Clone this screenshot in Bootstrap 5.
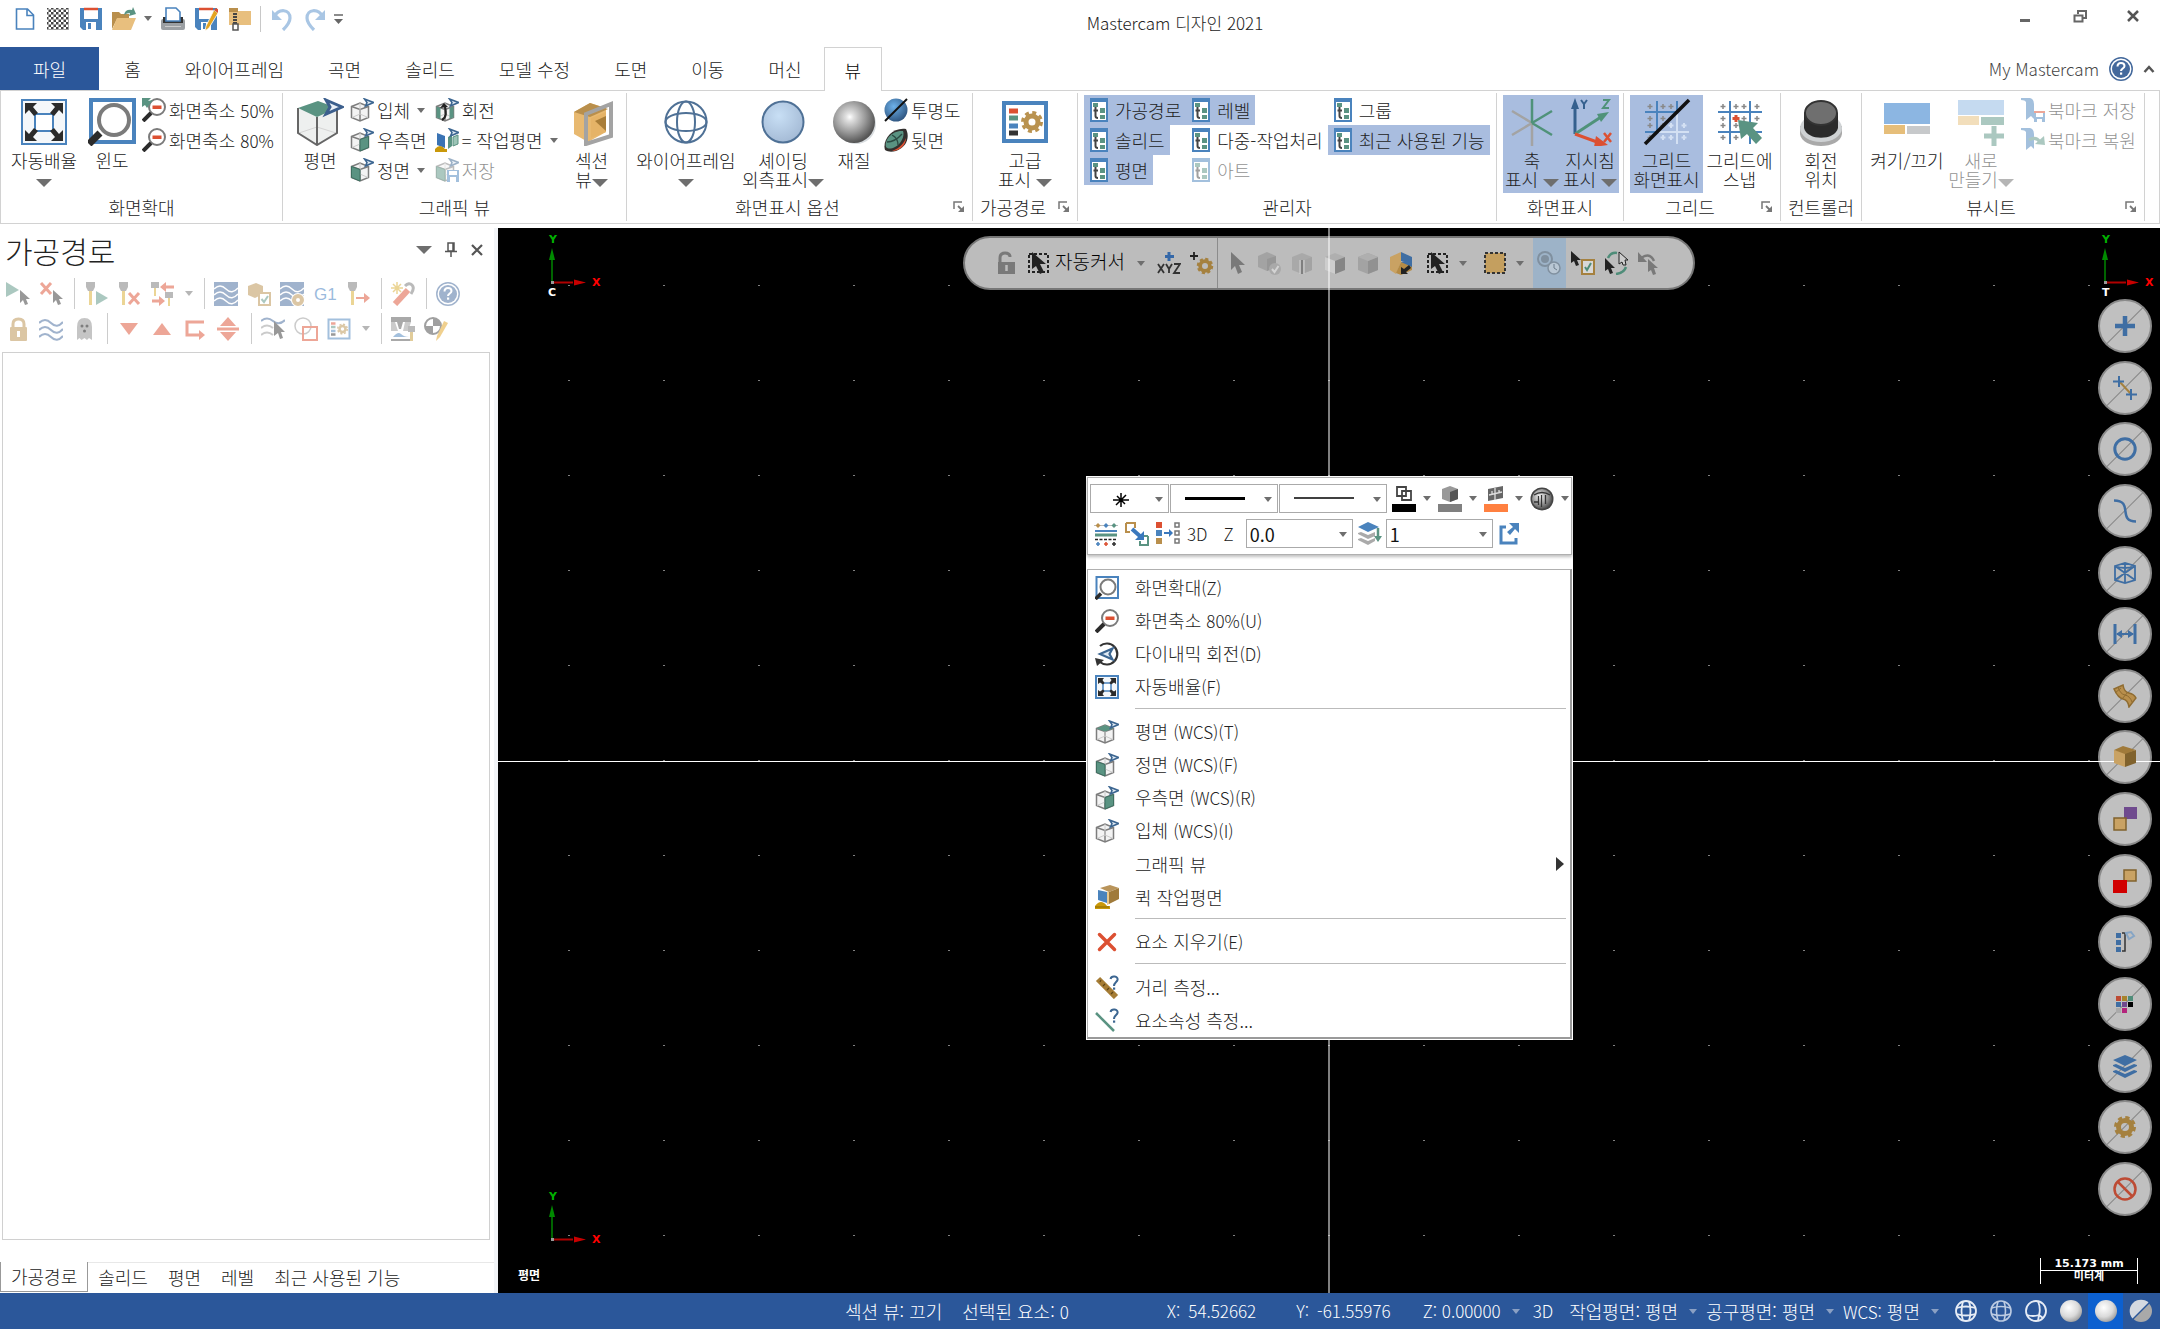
<!DOCTYPE html>
<html lang="ko">
<head>
<meta charset="utf-8">
<meta name="viewport" content="width=device-width, initial-scale=1">
<title>Mastercam 디자인 2021</title>
<link href="https://cdn.jsdelivr.net/npm/bootstrap@5.3.0/dist/css/bootstrap.min.css" rel="stylesheet">
<style>
  :root { --mc-blue:#2b579a; --mc-on:#a9bddf; --mc-line:#d2d2d2; --mc-text:#222; }
  body { font-family:"Noto Sans CJK KR","Noto Sans",sans-serif; font-size:18px; font-weight:300; line-height:20px; color:var(--mc-text); background:#fff; overflow:hidden; }
  button { background:none; border:0; padding:0; color:inherit; font:inherit; white-space:nowrap; }
  svg { flex:none; display:block; }
  .i24 { width:24px; height:24px; }
  .i48 { width:48px; height:48px; }
  .lat { font-size:17px; }
  .caret { display:inline-block; flex:none; width:0; height:0; border:4px solid transparent; border-top:5px solid #6e6e6e; border-bottom:0; }
  .caret-big { border-width:8px; border-top-width:8px; border-bottom:0; }

  .titlebar { height:47px; padding-left:13px; }
  .qat { gap:5px; height:30px; margin-top:-14px; }
  .win-name { font-size:17px; left:0; right:0; top:13px; padding-left:190px; }
  .win-btns { gap:29px; padding-right:15px; margin-top:-14px; }

  .tabs-row { height:43px; }
  .tabs-row .tab { height:43px; padding:0 22px; }
  .tabs-row .tab-file { background:var(--mc-blue); color:#fff; padding:0 33px; margin-right:3px; }
  .tabs-row .tab-on { height:44px; padding:0 20px; background:#fff; color:#000; border:1px solid var(--mc-line); border-bottom:0; position:relative; z-index:1; }
  .account { gap:10px; padding-right:5px; color:#444; }

  .ribbon { border:1px solid var(--mc-line); padding:2px 0; }
  .rgroup { border-right:1px solid var(--mc-line); flex:none; padding-top:2px; }
  .rgroup > .tools { height:98px; padding-left:6px; gap:2px; }
  .rgroup > .caption { height:28px; }
  .tight > .tools { gap:0; }
  .g-zoom { width:282px; } .g-view { width:344px; } .g-disp { width:346px; } .g-path { width:105px; } .g-mgr { width:419px; }
  .g-axis { width:127px; } .g-grid { width:157px; } .g-ctl { width:81px; } .g-sheet { width:283px; }
  .g-zoom > .tools { padding-left:4px; }
  .launch { width:24px; padding-left:5px; }
  .big { height:98px; padding-top:3px; line-height:19px; display:flex; flex-direction:column; align-items:center; flex:none; }
  .big > span { display:block; }
  .big svg { margin-bottom:5px; }
  .w-s { width:54px; } .w-m { width:58px; } .w-l { width:66px; } .w-g { width:73px; } .w-x { width:78px; } .w-y { width:84px; } .w-z { width:106px; }
  .small-btn { height:30px; display:flex; align-items:center; gap:3px; padding:0 1px; }
  .small-btn .caret { margin-left:4px; }
  .mgr { height:30px; display:flex; align-items:center; gap:7px; padding:0 5px 0 6px; }
  .on { background:var(--mc-on); }
  .off { opacity:.5; }

  .side { width:498px; border-right:4px solid #f2f4f7; }
  .side-head { height:48px; padding:0 10px 4px 5px; }
  .side-head .head-btn { margin-right:13px; }
  .side-title { font-size:30px; line-height:44px; font-weight:300; margin:0; color:#222; }
  .strip { height:35px; padding-left:6px; gap:9px; }
  .strip svg { opacity:.5; }
  .strip .caret { margin-left:3px; }
  .strip .rule { width:1px; height:31px; background:#ccc; margin-left:2px; }
  .tree { border:1px solid #d0d0d0; margin:6px 4px 0 2px; }
  .side-tabs { height:31px; margin-top:22px; border-top:1px solid #e8e8e8; padding-bottom:1px; }
  .side-tabs button { padding:0 10px 2px; }
  .side-tabs .cur { border:1px solid #999; border-top:0; margin-top:-1px; background:#fff; }

  .stage { background:#000 radial-gradient(circle 1px at center,#fff 0,#bbb 1px,transparent 1px) center center/95px 95px; color:#fff; overflow:hidden; }
  .axis-h { left:0; right:0; top:50%; height:1px; background:#fff; }
  .axis-v { top:0; bottom:0; left:50%; width:2px; margin-left:-1px; background:rgba(255,255,255,.5); }
  .gnomon { width:64px; height:72px; }
  .gn-tl { left:42px; top:0; } .gn-bl { left:42px; bottom:36px; } .gn-tr { right:3px; top:0; }
  .plane-name { left:20px; bottom:8px; font-size:12px; font-weight:700; }
  .scalebar { right:22px; bottom:9px; width:98px; height:26px; border:solid #fff; border-width:0 1px; font:700 11px/12px "DejaVu Sans","Noto Sans CJK KR",sans-serif; text-align:center; }
  .scalebar hr { margin:0; border-color:#fff; opacity:1; }

  .selbar { left:465px; top:8px; height:54px; width:732px; border:2px solid #777; border-radius:27px; background:#bcbcbc; color:#000; padding-left:29px; }
  .selbar svg { margin-right:9px; }
  .selbar .caret { margin-right:9px; }
  .selbar .bar { width:1px; height:50px; background:#8c8c8c; margin:0 6px 0 -6px; }
  .selbar .lit { height:50px; width:33px; background:#9db3c8; display:flex; align-items:center; padding-left:4px; margin:0 5px 0 0; }
  .selbar .dim { opacity:.35; }
  .auto-name { font-size:19px; padding-bottom:4px; }

  .quick { right:8px; top:71px; bottom:77px; }
  .quick button { width:54px; height:54px; border-radius:50%; border:2px solid #8a8a8a; background:#c0c0c0; display:flex; align-items:center; justify-content:center; position:relative; }
  .quick svg { position:relative; z-index:1; }
  .quick .slash::after { content:""; position:absolute; left:-1px; right:-1px; top:24px; height:1px; background:#888; transform:rotate(-45deg); }

  .pop { left:588px; top:248px; width:487px; background:#fff; color:var(--mc-text); padding:1px; z-index:5; }
  .mini { border:1px solid #b0b0b0; height:78px; padding:6px 2px 0; box-shadow:0 2px 3px rgba(0,0,0,.25); margin-bottom:14px; }
  .mini .line { height:29px; }
  .mini .line + .line { margin-top:6px; }
  .mini .tool-btn { margin-left:7px; }
  .combo { height:29px; border:1px solid #aaa; position:relative; margin-right:1px; background:#fff; }
  .combo input { border:0; outline:0; width:100%; height:27px; padding:0 3px; font-size:18px; font-weight:400; color:#111; background:none; }
  .combo .caret { position:absolute; right:5px; top:12px; }
  .c-pt { width:80px; } .c-ln { width:110px; } .c-num { width:107px; }
  .mini .pick { display:flex; align-items:center; gap:7px; margin-right:7px; }
  .menu { border:1px solid #b0b0b0; border-right:2px solid #999; border-bottom:2px solid #999; padding:1px 4px 1px 7px; color:var(--mc-text); }
  .menu button { height:33px; display:flex; align-items:center; width:100%; gap:16px; text-align:left; }
  .menu hr { margin:5px 0 6px 40px; border-color:#bbb; opacity:1; }
  .menu .sub { width:0; height:0; border:7px solid transparent; border-left:8px solid #333; border-right:0; margin-left:auto; margin-right:2px; }

  .status { height:36px; background:var(--mc-blue); color:#fff; padding-right:2px; }
  .status .caret { border-top-color:#8aa0c4; }
  .status button { display:flex; align-items:center; height:36px; }
  .status .drop { gap:11px; margin-right:9px; }
  .status .wide-gap { margin-right:98px; }
  .status .orb { width:35px; justify-content:center; }
  .status .picked { background:#0c60d0; }
</style>
<script src="https://cdn.jsdelivr.net/npm/bootstrap@5.3.0/dist/js/bootstrap.bundle.min.js"></script>
</head>
<body class="vh-100 d-flex flex-column">

<svg width="0" height="0" class="position-absolute" aria-hidden="true">
  <defs>
    <radialGradient id="gSteel" cx=".4" cy=".38" r=".62"><stop offset="0" stop-color="#fff"/><stop offset=".15" stop-color="#e0e0e0"/><stop offset=".6" stop-color="#999"/><stop offset="1" stop-color="#555"/></radialGradient>
    <radialGradient id="gBlue" cx=".4" cy=".35" r=".7"><stop offset="0" stop-color="#c8dff5"/><stop offset="1" stop-color="#a3b9d4"/></radialGradient>
    <radialGradient id="gDeep" cx=".4" cy=".35" r=".7"><stop offset="0" stop-color="#6db1ea"/><stop offset="1" stop-color="#2d527c"/></radialGradient>
    <radialGradient id="gOrb" cx=".4" cy=".35" r=".7"><stop offset="0" stop-color="#fff"/><stop offset=".6" stop-color="#dadada"/><stop offset="1" stop-color="#999"/></radialGradient>
    <pattern id="pChk" width="5" height="5" patternUnits="userSpaceOnUse"><rect width="2.500" height="2.500" fill="#444"/><rect x="2.500" y="2.500" width="2.500" height="2.500" fill="#444"/></pattern>
  </defs>
  <symbol id="eye" viewBox="0 0 24 24"><path d="M14.500 1l9 3.500-8 3.500 1.500-3.500z" fill="#dfe9f3" stroke="#3c6691" stroke-width="1.600"/></symbol>
  <symbol id="cube" viewBox="0 0 24 24"><path d="M1.500 8.500L10 5l8.500 3.500v11L10 23l-8.500-3.500z" fill="#f3f3f3" stroke="#7d7d7d" stroke-width="1.500"/><path d="M1.500 8.500L10 11.500l8.500-3M10 11.500V23" fill="none" stroke="#7d7d7d" stroke-width="1.500"/><path d="M10 5v11l-8 3.500M10 16l8 3.500" fill="none" stroke="#ccc"/></symbol>
  <symbol id="v-iso" viewBox="0 0 24 24"><use href="#cube"/><use href="#eye"/></symbol>
  <symbol id="v-top" viewBox="0 0 24 24"><use href="#cube"/><path d="M1.500 8.500L10 5l8.500 3.500-8.500 3z" fill="#5a9382"/><use href="#eye"/></symbol>
  <symbol id="v-front" viewBox="0 0 24 24"><use href="#cube"/><path d="M1.500 8.500l8.500 3V23l-8.500-3.500z" fill="#5a9382" stroke="#3d6f60"/><use href="#eye"/></symbol>
  <symbol id="v-right" viewBox="0 0 24 24"><use href="#cube"/><path d="M18.500 8.500l-8.500 3V23l8.500-3.500z" fill="#5a9382" stroke="#3d6f60"/><use href="#eye"/></symbol>
  <symbol id="v-rot" viewBox="0 0 24 24"><use href="#cube"/><path d="M1.500 8.500l4 1.500v11l-4-1.500zM18.500 8.500l-4 1.500v11l4-1.500z" fill="#5a9382"/><path d="M7 22c5-3 4-8 3-13" stroke="#222" stroke-width="2.200" fill="none"/><path d="M5 10l4-5 4 4z" fill="#222"/><use href="#eye"/></symbol>
  <symbol id="v-eq" viewBox="0 0 24 24"><path d="M2 5l8 3v12l-8-3z" fill="#3a73b4"/><path d="M13 9l4-2v11l-4 3z" fill="#5a9382"/><path d="M18 9l5-2v9l-5 2z" fill="#9cc4b6" stroke="#5a9382"/><path d="M0 24v-3q5-6 10 0h2v3z" fill="#c9980a"/><use href="#eye"/></symbol>
  <symbol id="v-save" viewBox="0 0 24 24"><use href="#v-front"/><rect x="12" y="12" width="12" height="12" fill="#4a83bd"/><rect x="14" y="13" width="8" height="4" fill="#fff"/><rect x="15" y="19" width="6" height="5" fill="#fff"/></symbol>
  <symbol id="v-big" viewBox="0 0 48 48"><path d="M2 10L22 3l19 7v25L21 47 2 35z" fill="#eef0ef"/><path d="M2 10L22 3l19 7-20 9z" fill="#5a9382"/><path d="M21 29L3 35M21 29l19 6" stroke="#d5d5d5"/><path d="M2 10v25l19 12 20-12V10M21 19v28" fill="none" stroke="#666" stroke-width="2"/><path d="M30 2l16 7-16 7 4-7z" fill="#eaf0f6" stroke="#3c5f8d" stroke-width="3"/></symbol>
  <symbol id="fit" viewBox="0 0 48 48"><rect x="2" y="2" width="44" height="44" fill="#f4f7fa" stroke="#4a83bd" stroke-width="2"/><rect x="15" y="16" width="18" height="17" fill="#fff" stroke="#4a83bd" stroke-width="2"/><path d="M5 5h12l-4 4 5 6-4 3-5-6-4 4zM43 5H31l4 4-5 6 4 3 5-6 4 4zM5 43h12l-4-4 5-6-4-3-5 6-4-4zM43 43H31l4-4-5-6 4-3 5 6 4-4z" fill="#2b2b2b"/></symbol>
  <symbol id="fit-s" viewBox="0 0 24 24"><rect x="1" y="1" width="22" height="22" fill="#f4f7fa" stroke="#4a83bd" stroke-width="2"/><rect x="8" y="8" width="8" height="8" fill="#fff" stroke="#4a83bd" stroke-width="1.500"/><path d="M3 3h6L7.500 5 9.500 8 8 9.500 5 7.500 3 9zM21 3h-6l1.500 2-2 3L16 9.500l3-2 2 1.500zM3 21h6l-1.500-2 2-3L8 14.500l-3 2L3 15zM21 21h-6l1.500-2-2-3 1.500-1.500 3 2 2-1.500z" fill="#2b2b2b"/></symbol>
  <symbol id="win" viewBox="0 0 48 48"><rect x="3" y="2" width="43" height="42" fill="#fff" stroke="#4a83bd" stroke-width="4"/><circle cx="26" cy="22" r="15" fill="none" stroke="#7b7b7b" stroke-width="4"/><path d="M1 46l11-11" stroke="#2b2b2b" stroke-width="7"/></symbol>
  <symbol id="minus" viewBox="0 0 24 24"><circle cx="15" cy="9" r="8" fill="#fff" stroke="#7b7b7b" stroke-width="2"/><rect x="10.500" y="7.500" width="9" height="3.500" fill="#dc5032"/><path d="M1 23l8-8" stroke="#2b2b2b" stroke-width="4"/></symbol>
  <symbol id="half" viewBox="0 0 24 24"><use href="#minus"/><path d="M0 9V0h9L6 3l5-1-6 8-2-3z" fill="#5a9382"/></symbol>
  <symbol id="section" viewBox="0 0 48 48"><path d="M6 14l16-9 16 5v24l-18 10L6 36z" fill="#e8b970"/><path d="M6 14l16-9 18 6-18 8z" fill="#b98f4c"/><path d="M18 16l25-10v32L18 46z" fill="none" stroke="#a3a3a3" stroke-width="4"/><path d="M23 20l15-6v20l-15 6z" fill="#e5b367"/><path d="M27 23l11-5v15z" fill="#a97d38"/></symbol>
  <symbol id="wire" viewBox="0 0 48 48"><g fill="none" stroke="#4f7196" stroke-width="2"><circle cx="24" cy="24" r="20.500"/><ellipse cx="24" cy="24" rx="9" ry="20.500"/><ellipse cx="24" cy="24" rx="20.500" ry="9"/></g></symbol>
  <symbol id="shade" viewBox="0 0 48 48"><circle cx="24" cy="24" r="20.500" fill="url(#gBlue)" stroke="#4f7196" stroke-width="2"/></symbol>
  <symbol id="mat" viewBox="0 0 48 48"><circle cx="26" cy="26" r="20" fill="#d9dde0"/><circle cx="24" cy="24" r="21" fill="url(#gSteel)"/></symbol>
  <symbol id="trans" viewBox="0 0 24 24"><circle cx="12" cy="12" r="11.500" fill="url(#gDeep)"/><path d="M1 23L23 1" stroke="#111" stroke-width="2"/></symbol>
  <symbol id="back" viewBox="0 0 24 24"><path d="M1 22C-2 12 8-1 22 1c4 8 1 18-10 22-4 1-8 1-11-1z" fill="#33302e"/><path d="M22 10c0 7-6 13-14 13 8-3 12-8 14-13z" fill="#dc5032"/><path d="M2 19C0 12 8 2 19 3c2 5-2 13-8 16-4 2-7 2-9 0z" fill="#5a9382"/><path d="M3 14q8 0 15-8M8 7q6 3 6 10" fill="none" stroke="#2b4a42" stroke-width="1.300"/></symbol>
  <symbol id="adv" viewBox="0 0 48 48"><rect x="3" y="5" width="42" height="38" fill="#fff" stroke="#4a83bd" stroke-width="4"/><path d="M8 13h9" stroke="#dc5032" stroke-width="5"/><path d="M8 20h9" stroke="#5a9382" stroke-width="5"/><path d="M8 28h9" stroke="#4a83bd" stroke-width="5"/><path d="M8 35h9" stroke="#333" stroke-width="5"/><circle cx="31" cy="24" r="6" fill="none" stroke="#b9924f" stroke-width="5"/><circle cx="31" cy="24" r="9.500" fill="none" stroke="#b9924f" stroke-width="3" stroke-dasharray="4 3.460"/></symbol>
  <symbol id="mgr" viewBox="0 0 18 24"><path d="M1 1h16v22H1z" fill="#fff" stroke="#4a83bd" stroke-width="2"/><path d="M1 2h16" stroke="#4a83bd" stroke-width="4"/><path d="M5.500 9v9q0 2 2.500 2M3.500 12.500h4.500" stroke="#444" stroke-width="2" fill="none"/><rect x="3" y="5" width="5" height="4" fill="#5a9382"/><rect x="10" y="10" width="5" height="5" fill="#5a9382"/><rect x="10" y="17" width="5" height="4" fill="#5a9382"/></symbol>
  <symbol id="axes" viewBox="0 0 48 48"><path d="M24 25L4 13M24 25L4 37M24 25v23" stroke="#a3a3a3" stroke-width="2.500"/><path d="M24 25V1M24 25l20-12M24 25l20 12" stroke="#4f9279" stroke-width="2.500"/></symbol>
  <symbol id="gnom" viewBox="0 0 48 48"><path d="M9 36V8" stroke="#35608e" stroke-width="3"/><path d="M5 11L9 0l4 11z" fill="#35608e"/><path d="M9 36l26-17" stroke="#4f9279" stroke-width="3"/><path d="M31 16l12-2-8 10z" fill="#4f9279"/><path d="M9 36l22 8" stroke="#dc5032" stroke-width="3"/><path d="M30 38l12 9-14 2z" fill="#dc5032"/><path d="M15 2l3 4 3-4M18 6v5" stroke="#35608e" stroke-width="2" fill="none"/><path d="M37 2h6l-6 8h6" stroke="#4f9279" stroke-width="2" fill="none"/><path d="M38 35l7 9M45 35l-7 9" stroke="#dc5032" stroke-width="2.500"/></symbol>
  <symbol id="gdots" viewBox="0 0 48 48"><path d="M14 3v43M34 3v43M2 14h44M2 34h44" stroke="#4a83bd" stroke-width="2"/><path d="M7 6v5M4.500 8.500h5M20 6v5M17.500 8.500h5M28 6v5M25.500 8.500h5M41 6v5M38.500 8.500h5M7 18v5M4.500 20.500h5M20 18v5M17.500 20.500h5M7 25v5M4.500 27.500h5M28 18v5M25.500 20.500h5M41 18v5M38.500 20.500h5M20 25v5M17.500 27.500h5M7 37v5M4.500 39.500h5M20 37v5M17.500 39.500h5" stroke="#888" stroke-width="1.500"/></symbol>
  <symbol id="grid" viewBox="0 0 48 48"><use href="#gdots"/><path d="M46 4v42H4z" fill="#a9bddf"/><path d="M34 16v30M16 34h30M41 25v5M38.500 27.500h5M28 25v5M25.500 27.500h5M28 37v5M25.500 39.500h5M20 37v5M17.500 39.500h5M41 37v5M38.500 39.500h5" stroke="#d3e0f3" stroke-width="2" fill="none"/><path d="M2 46L46 2" stroke="#111" stroke-width="3.500"/></symbol>
  <symbol id="snap" viewBox="0 0 48 48"><use href="#gdots"/><path d="M20 17v7M16.500 20.500h7" stroke="#dc5032" stroke-width="3"/><path d="M22 22l20 3-5 5 9 10-6 6-9-10-6 5z" fill="#5a9382"/></symbol>
  <symbol id="knob" viewBox="0 0 48 48"><path d="M3 28v8c2 16 40 16 42 0v-8z" fill="#a9a9a9"/><ellipse cx="24" cy="30" rx="21" ry="14" fill="#cfd2d4"/><path d="M7 15v15c3 13 31 13 34 0V15z" fill="#2b2b2b"/><ellipse cx="24" cy="15" rx="16" ry="12" fill="#6f6f6f" stroke="#333" stroke-width="2"/></symbol>
  <symbol id="vs" viewBox="0 0 48 48"><rect x="1" y="5" width="46" height="21" fill="#8cb6e2"/><rect x="1" y="27" width="21" height="9" fill="#e6be7a"/><rect x="24" y="28" width="23" height="8" fill="#c7c9cb"/></symbol>
  <symbol id="vsnew" viewBox="0 0 48 48"><rect x="1" y="2" width="46" height="15" fill="#8cb6e2"/><rect x="1" y="18" width="21" height="9" fill="#e6be7a"/><rect x="24" y="19" width="23" height="8" fill="#5a9382"/><path d="M37 28v20M27 38h20" stroke="#5a9382" stroke-width="5"/></symbol>
  <symbol id="bm" viewBox="0 0 24 24"><path d="M0 0h9q4 1 4 6v15l-3-3-5 4V4q-1-2-5-2z" fill="#4a83bd"/></symbol>
  <symbol id="bmsave" viewBox="0 0 24 24"><use href="#bm"/><rect x="13" y="13" width="11" height="11" fill="#4a83bd"/><rect x="15" y="15" width="7" height="4" fill="#fff"/><rect x="16" y="21" width="5" height="3" fill="#fff"/><path d="M13 14h11" stroke="#dc5032" stroke-width="2"/></symbol>
  <symbol id="bmback" viewBox="0 0 24 24"><use href="#bm"/><path d="M8 12q7-4 11 2" stroke="#5a9382" stroke-width="3" fill="none"/><path d="M14 16l10 1-1-9z" fill="#5a9382"/></symbol>
  <symbol id="help" viewBox="0 0 24 24"><circle cx="12" cy="12" r="11.200" fill="#fff" stroke="#44699c" stroke-width="1.500"/><circle cx="12" cy="12" r="9" fill="#44699c"/><path d="M8.500 9.500c0-5 7-4.500 7-.5 0 2.500-3.500 2.500-3.500 5" fill="none" stroke="#fff" stroke-width="2"/><rect x="11" y="15.500" width="2.200" height="2.200" fill="#fff"/></symbol>
  <symbol id="lau" viewBox="0 0 12 12"><path d="M1 8V1h8" fill="none" stroke="#777" stroke-width="1.500"/><path d="M5 5l4 4" stroke="#777" stroke-width="1.800"/><path d="M11 5v6H5z" fill="#777"/></symbol>

  <symbol id="new" viewBox="0 0 24 24"><path d="M3.500 2h11l6 6v14h-17zM14 2v6.500h6.500" fill="#fff" stroke="#4a83bd" stroke-width="1.600"/></symbol>
  <symbol id="check" viewBox="0 0 24 24"><rect x="1" y="1" width="22" height="22" fill="url(#pChk)"/></symbol>
  <symbol id="save" viewBox="0 0 24 24"><path d="M1 1h22v22H4l-3-3z" fill="#4a83bd"/><rect x="5" y="1" width="14" height="11" fill="#fff"/><path d="M5 2h14" stroke="#dc5032" stroke-width="2.500"/><rect x="7" y="15" width="10" height="8" fill="#fff"/><rect x="9" y="16" width="3" height="6" fill="#4a83bd"/></symbol>
  <symbol id="open" viewBox="0 0 24 24"><path d="M0 5h7l2 2h8v5H5L0 22z" fill="#b98f4c"/><path d="M5 11h19l-5 12H0z" fill="#e8bf7e"/><path d="M12 8q1-6 8-5l1-3 3 7-7 2 1-3q-3 0-6 2z" fill="#5a9382"/></symbol>
  <symbol id="print" viewBox="0 0 24 24"><rect x="0" y="12" width="24" height="11" rx="2" fill="#9b9fa3"/><path d="M2 10h20v6H2z" fill="#333"/><path d="M5 1h10l4 4v9H5z" fill="#fff" stroke="#4a83bd" stroke-width="1.600"/><path d="M4 19.500h16" stroke="#ccc"/></symbol>
  <symbol id="saveas" viewBox="0 0 24 24"><use href="#save"/><path d="M20 3l4 3L15 21l-4 3 1-5z" fill="#e3a320" stroke="#fff" stroke-width=".8"/><path d="M20 3l2-2 3 2-1 3z" fill="#dc5032"/></symbol>
  <symbol id="zip" viewBox="0 0 24 24"><path d="M2 1h9v3h13v14H2z" fill="#e8bf7e"/><path d="M2 1h9v4H2z" fill="#b98f4c"/><path d="M8 6v12" stroke="#444" stroke-width="4" stroke-dasharray="2 1"/><rect x="6" y="17" width="5" height="6" fill="#fff" stroke="#555" stroke-width="1.500"/></symbol>
  <symbol id="undo" viewBox="0 0 24 24"><path d="M4 10C9 1 20 2 20 11c0 5-4 9-7 12" fill="none" stroke="#a9c6e4" stroke-width="3.200"/><path d="M2 3v10h10z" fill="#a9c6e4"/></symbol>

  <symbol id="ptr" viewBox="0 0 24 24"><path d="M7 1v18l4-4 3 8 4-2-3-7h6z"/></symbol>
  <symbol id="ptr-s" viewBox="0 0 24 24"><path d="M14 8v13l3-3 2 5 3-1-2-5h4z" fill="#333"/></symbol>
  <symbol id="play" viewBox="0 0 24 24"><path d="M0 0l13 8-13 7z" fill="#5a9382"/><use href="#ptr-s"/></symbol>
  <symbol id="xsel" viewBox="0 0 24 24"><path d="M2 1l10 11M12 1L2 12" stroke="#dc5032" stroke-width="3"/><use href="#ptr-s"/></symbol>
  <symbol id="tool" viewBox="0 0 24 24"><path d="M2 0h9v5l-2 4H4L2 5z" fill="#777"/><rect x="5" y="9" width="3" height="14" fill="#d9ac2e"/></symbol>
  <symbol id="tplay" viewBox="0 0 24 24"><use href="#tool"/><path d="M12 9l12 7-12 7z" fill="#5a9382"/></symbol>
  <symbol id="tx" viewBox="0 0 24 24"><use href="#tool"/><path d="M12 11l10 11M22 11L12 22" stroke="#dc5032" stroke-width="3"/></symbol>
  <symbol id="tswap" viewBox="0 0 24 24"><path d="M1 0h8v6H1zM15 10h8v6h-8z" fill="#777"/><path d="M4 6h2v8H4zM18 16h2v8h-2z" fill="#d9ac2e"/><path d="M24 5H15M2 19h9" stroke="#dc5032" stroke-width="3"/><path d="M10 5l6-5v10zM15 19l-6-5v10z" fill="#dc5032"/></symbol>
  <symbol id="texp" viewBox="0 0 24 24"><use href="#tool"/><path d="M10 16h10" stroke="#dc5032" stroke-width="2"/><path d="M18 11l6 5-6 5z" fill="#dc5032"/></symbol>
  <symbol id="wbox" viewBox="0 0 24 24"><rect width="24" height="24" fill="#44699c"/><path d="M0 7q6-6 12 0t12-1M0 13q6-6 12 0t12-1M0 19q6-6 12 0t12-1" fill="none" stroke="#fff" stroke-width="1.500"/></symbol>
  <symbol id="wgear" viewBox="0 0 24 24"><use href="#wbox"/><circle cx="18" cy="18" r="7" fill="#fff"/><circle cx="18" cy="18" r="4" fill="none" stroke="#b98f4c" stroke-width="4"/></symbol>
  <symbol id="verify" viewBox="0 0 24 24"><path d="M1 4l8-3 7 3v8l-8 4-7-3z" fill="#b98f4c"/><rect x="12" y="11" width="11" height="12" fill="#fff" stroke="#b98f4c" stroke-width="2"/><path d="M14.500 17l2.500 3 4-6" fill="none" stroke="#5a9382" stroke-width="2"/></symbol>
  <symbol id="wrench" viewBox="0 0 24 24"><path d="M4 22L17 8" stroke="#dc5032" stroke-width="6"/><path d="M14 4q4-4 7-1t-1 9" fill="none" stroke="#777" stroke-width="3"/><path d="M6 0v12M0 6h12M2 2l8 8M10 2l-8 8" stroke="#d9ac2e" stroke-width="1.500"/></symbol>
  <symbol id="lock" viewBox="0 0 24 24"><rect x="4" y="10" width="17" height="14" rx="1" fill="#b98f4c"/><path d="M7 11V7q0-5 5.500-5T18 7v4" fill="none" stroke="#b98f4c" stroke-width="3"/><path d="M12.500 14v6" stroke="#fff" stroke-width="3"/></symbol>
  <symbol id="waves" viewBox="0 0 24 24"><path d="M0 6q6-6 12 0t12-1M0 13q6-6 12 0t12-1M0 20q6-6 12 0t12-1" fill="none" stroke="#44699c" stroke-width="2"/></symbol>
  <symbol id="ghost" viewBox="0 0 24 24"><path d="M5 23V10q0-9 7.500-9T20 10v13l-3-2-2 2-2.500-2-3 2-2-2z" fill="#8d8d8d"/><circle cx="10" cy="9" r="1.500"/><circle cx="15" cy="9" r="1.500"/><circle cx="12.500" cy="14" r="1.500"/></symbol>
  <symbol id="down" viewBox="0 0 24 24"><path d="M3 6h18l-9 12z" fill="#dc5032"/></symbol>
  <symbol id="up" viewBox="0 0 24 24"><path d="M3 18h18L12 6z" fill="#dc5032"/></symbol>
  <symbol id="loop" viewBox="0 0 24 24"><path d="M21 5H4v13h14" fill="none" stroke="#dc5032" stroke-width="3"/><path d="M16 13l6 5-6 5z" fill="#dc5032"/></symbol>
  <symbol id="split" viewBox="0 0 24 24"><path d="M1 12h22" stroke="#dc5032" stroke-width="3"/><path d="M4 9h16l-8-9zM4 15h16l-8 9z" fill="#dc5032"/></symbol>
  <symbol id="wsel" viewBox="0 0 24 24"><path d="M0 4q6-5 12 0t12-1" fill="none" stroke="#44699c" stroke-width="2"/><path d="M0 11q6-5 12 0M0 18q6-5 12 0" fill="none" stroke="#999" stroke-width="2"/><path d="M13 4v15l4-3 2 6 3-1-2-6h4z" fill="#333"/></symbol>
  <symbol id="shapes" viewBox="0 0 24 24"><circle cx="9" cy="9" r="8" fill="none" stroke="#999" stroke-width="1.500"/><rect x="9" y="10" width="14" height="13" fill="none" stroke="#dc5032" stroke-width="2"/></symbol>
  <symbol id="mach" viewBox="0 0 24 24"><path d="M0 0h20v5h-8l-2 7H8L6 5H0zM0 22h20v2H0z" fill="#555"/><path d="M0 5h4l3 9H0zM20 5h-6l-2 9h5z" fill="#999"/><path d="M2 20q5-6 8-3t8 3z" fill="#4a83bd"/><path d="M17 9h7v6h-7z" fill="#777"/><path d="M19 15h3v9h-3z" fill="#c59a37"/></symbol>
  <symbol id="balance" viewBox="0 0 24 24"><circle cx="9" cy="9" r="8" fill="#fff" stroke="#444" stroke-width="2"/><path d="M9 1v8h8a8 8 0 0 0-8-8M9 17V9H1a8 8 0 0 0 8 8" fill="#444"/><path d="M20 4l4 2-8 14-4 4 1-5z" fill="#e3a320"/></symbol>

  <symbol id="ulock" viewBox="0 0 24 24"><rect x="4" y="11" width="17" height="12"/><path d="M6 11V7q0-5 5-5t5 4" fill="none" stroke="#000" stroke-width="3"/><path d="M12.500 14v6" stroke="#bcbcbc" stroke-width="2.500"/></symbol>
  <symbol id="dsel" viewBox="0 0 24 24"><rect x="2" y="3" width="19" height="18" fill="none" stroke="#222" stroke-width="2" stroke-dasharray="3 2"/><path d="M5 1v17l4-3 4 8 4-2-4-8h6z" fill="#222"/></symbol>
  <symbol id="xyz" viewBox="0 0 24 24"><path d="M12 1v9M8 5.500h9" stroke="#3568a8" stroke-width="3"/><path d="M1 13l6 9M7 13l-6 9M9 13l3 5 3-5M12 18v4M17 13h6l-6 9h6" fill="none" stroke="#333" stroke-width="1.800"/></symbol>
  <symbol id="cog" viewBox="0 0 24 24"><circle cx="12" cy="12" r="6.500" fill="none" stroke="#a5813f" stroke-width="5"/><circle cx="12" cy="12" r="9.500" fill="none" stroke="#a5813f" stroke-width="3" stroke-dasharray="4.200 3.260"/></symbol>
  <symbol id="cogp" viewBox="0 0 24 24"><path d="M4 1v8M0 5h8" stroke="#222" stroke-width="1.800"/><svg x="6" y="6" width="18" height="18"><use href="#cog"/></svg></symbol>
  <symbol id="sol" viewBox="0 0 24 24"><path d="M2 6l10-4 10 4v13l-10 4-10-4z" fill="#777"/><path d="M12 10l10-4v13l-10 4z" fill="#444"/><path d="M2 6l10-4 10 4-10 4z" fill="#999"/></symbol>
  <symbol id="solck" viewBox="0 0 24 24"><path d="M1 5l9-4 9 4v11l-9 4-9-4z" fill="#777"/><path d="M10 8l9-3v11l-9 4z" fill="#555"/><circle cx="18" cy="18" r="6" fill="#888"/><path d="M15 18l2.500 3 4-6" fill="none" stroke="#fff" stroke-width="2"/></symbol>
  <symbol id="soled" viewBox="0 0 24 24"><path d="M2 6l10-4 10 4v13l-10 4-10-4z" fill="#888"/><path d="M12 10l10-4v13l-10 4z" fill="#777"/><path d="M12 9v14" stroke="#fff" stroke-width="5"/><path d="M12 9v14" stroke="#111" stroke-width="2.500"/></symbol>
  <symbol id="solfc" viewBox="0 0 24 24"><path d="M2 6l10-4 10 4v13l-10 4-10-4z" fill="#999"/><path d="M2 6l10 4v13L2 19z" fill="#eee"/><path d="M12 10l10-4v13l-10 4z" fill="#222"/></symbol>
  <symbol id="solc" viewBox="0 0 24 24"><path d="M1 6l11-5v10l-5 12-6-4z" fill="#c9a263"/><path d="M12 1l11 5v6l-11-2z" fill="#3f6ea3"/><path d="M12 11l11 1v7l-11 5-5-2z" fill="#b58b45"/><path d="M12 11l11-3v8z" fill="#3f6ea3"/><path d="M12 23v-7l3 2 5-4 2 3-5 4 2 2z" fill="#222"/></symbol>
  <symbol id="area" viewBox="0 0 24 24"><rect x="2" y="2" width="20" height="20" fill="#c49f5f" stroke="#333" stroke-width="2" stroke-dasharray="3 2"/></symbol>
  <symbol id="clock" viewBox="0 0 24 24"><circle cx="8" cy="8" r="7" fill="none" stroke="#80909f" stroke-width="2"/><circle cx="8" cy="8" r="4" fill="#80909f"/><circle cx="17" cy="17" r="6" fill="#b9c7d4" stroke="#80909f" stroke-width="1.500"/><path d="M17 13v4l3 2" fill="none" stroke="#6d7d8c"/></symbol>
  <symbol id="selchk" viewBox="0 0 24 24"><path d="M0 0v12l3-2 2 5 3-1-2-5h4z" fill="#222"/><rect x="11" y="9" width="12" height="14" fill="#d8d8d8" stroke="#a5813f" stroke-width="2"/><path d="M14 16l2 3 4-7" fill="none" stroke="#4f8d79" stroke-width="2"/></symbol>
  <symbol id="selinv" viewBox="0 0 24 24"><path d="M1 7v13l3-2 2 5 3-1-2-5h4z" fill="#222"/><path d="M15 1v12l3-2 1 3h3l-1-5h3z" fill="#ccc" stroke="#222"/><path d="M4 7q3-6 9-5M12 23q8-1 10-7" fill="none" stroke="#4f8d79" stroke-width="2.500"/></symbol>
  <symbol id="selundo" viewBox="0 0 24 24"><path d="M4 7q9-6 13 3" fill="none" stroke="#000" stroke-width="2.500"/><path d="M1 1v10h9z"/><path d="M11 8v13l3-2 2 5 3-1-2-6h4z"/></symbol>

  <symbol id="q1" viewBox="0 0 24 24"><path d="M12 2v20M2 12h20" stroke="#3f6ea3" stroke-width="4.500"/></symbol>
  <symbol id="q2" viewBox="0 0 24 24"><path d="M6 5l12 13" stroke="#a5813f" stroke-width="2"/><path d="M6 0v11M0 5.500h11M18 13v11M13 18.500h11" stroke="#3f6ea3" stroke-width="2"/></symbol>
  <symbol id="q3" viewBox="0 0 24 24"><circle cx="12" cy="12" r="10.200" fill="none" stroke="#3f6ea3" stroke-width="3"/></symbol>
  <symbol id="q4" viewBox="0 0 24 24"><path d="M1 1.500c20 0 3 21 22 21" fill="none" stroke="#3f6ea3" stroke-width="2.500"/></symbol>
  <symbol id="q5" viewBox="0 0 24 24"><path d="M2 5l10-3 10 3v14l-10 3-10-3zM2 5l20 14M22 5L2 19M12 2v20M2 5q10 4 20 0" fill="none" stroke="#3f6ea3" stroke-width="1.800"/></symbol>
  <symbol id="q6" viewBox="0 0 24 24"><path d="M2 2v20M22 2v20" stroke="#3f6ea3" stroke-width="3"/><path d="M4 12h16" stroke="#3f6ea3" stroke-width="2"/><path d="M3 12l6-4v8zM21 12l-6-4v8z" fill="#3f6ea3"/></symbol>
  <symbol id="q7" viewBox="0 0 24 24"><path d="M1 5l9-4q1 7 6 8t7 5l-7 9q-1-7-6-8T1 5z" fill="#b98f4c" stroke="#8f6c31" stroke-width="1.500"/><path d="M5 3q2 7 7 8t7 7M2 9l6-5M9 15l6-7" fill="none" stroke="#8f6c31"/></symbol>
  <symbol id="q8" viewBox="0 0 24 24"><path d="M1 5l11 3v14L1 18z" fill="#c9a263"/><path d="M23 5L12 8v14l11-4z" fill="#80622d"/><path d="M1 5l9-4 13 4-11 4z" fill="#a07a3a"/></symbol>
  <symbol id="q9" viewBox="0 0 24 24"><rect x="11" y="0" width="13" height="12" fill="#6f4a8e"/><rect x="1" y="11" width="12" height="12" fill="#c9a263" stroke="#80622d" stroke-width="1.500"/></symbol>
  <symbol id="q10" viewBox="0 0 24 24"><rect x="11" y="1" width="12" height="11" fill="#c9a263" stroke="#80622d" stroke-width="1.500"/><rect x="0" y="11" width="14" height="13" fill="#d10000"/></symbol>
  <symbol id="q11" viewBox="0 0 24 24"><path d="M3 3h5v5H3zM3 10h5v5H3zM3 17h5v5H3z" fill="#3f6ea3"/><path d="M9 3h3v18H9" fill="none" stroke="#333" stroke-width="1.500"/><path d="M13 3l3 6 5-3-3-4z" fill="none" stroke="#86a5c5" stroke-width="2"/></symbol>
  <symbol id="q12" viewBox="0 0 24 24"><path d="M3 4h5v5H3z" fill="#bd4b34"/><path d="M9 4h5v5H9z" fill="#a8832c"/><path d="M15 4h5v5h-5z" fill="#4f8d79"/><path d="M3 10h5v5H3z" fill="#3f6ea3"/><path d="M9 10h5v5H9z" fill="#6f4a8e"/><path d="M15 10h5v5h-5z"/><path d="M3 16h5v5H3z" fill="#aaa"/><path d="M9 16h5v5H9z" fill="#b3257c"/></symbol>
  <symbol id="q13" viewBox="0 0 24 24"><path d="M0 6l12-5 12 5-12 6zM0 11l3-1 9 4 9-4 3 1v1l-12 6-12-6zM0 17l3-1 9 4 9-4 3 1v1l-12 6-12-6z" fill="#3f6ea3"/></symbol>
  <symbol id="q15" viewBox="0 0 24 24"><circle cx="12" cy="12" r="10.500" fill="none" stroke="#bd4b34" stroke-width="2.500"/><path d="M5 5l14 14" stroke="#bd4b34" stroke-width="2.500"/></symbol>

  <symbol id="dyn" viewBox="0 0 24 24"><path d="M5 4a10.500 10.500 0 1 1 0 16" fill="none" stroke="#333" stroke-width="2.200"/><path d="M0 16l9 2-7 6z" fill="#333"/><path d="M17.500 6.500L5 12l12.500 5.500-3-5.500z" fill="#dfe9f3" stroke="#3c6691" stroke-width="2.200"/></symbol>
  <symbol id="quickp" viewBox="0 0 24 24"><path d="M5 3l10-3 9 3-10 4z" fill="#b9945a"/><path d="M14 7l10-4v11l-10 5z" fill="#a07a3a"/><path d="M12 7l2 0v12l-2 1z" fill="#e8c88e"/><path d="M3 5l9 2v11l-9-3z" fill="#4a83bd"/><path d="M0 24v-3q6-8 12 0h3v3z" fill="#c9980a"/><path d="M0 22h14" stroke="#8a6800"/></symbol>
  <symbol id="del" viewBox="0 0 24 24"><path d="M4.500 4.500l15 15M19.500 4.500l-15 15" stroke="#dc5032" stroke-width="3.500" stroke-linecap="round"/></symbol>
  <symbol id="qm" viewBox="0 0 24 24"><path d="M15.500 4c1-4 8-3 7 1-.5 2-3.500 2.500-3.500 6" fill="none" stroke="#3c6691" stroke-width="2"/><rect x="18" y="12.500" width="2.200" height="2.200" fill="#3c6691"/></symbol>
  <symbol id="dist" viewBox="0 0 24 24"><path d="M3 4l18 18" stroke="#a57c35" stroke-width="6"/><path d="M6 5l-1 2M10 9l-2 2M14 13l-2 2M18 17l-2 2" stroke="#5e4417" stroke-width="1.200"/><use href="#qm"/></symbol>
  <symbol id="prop" viewBox="0 0 24 24"><path d="M1 5l18 18" stroke="#5a9382" stroke-width="2.500"/><use href="#qm"/></symbol>
  <symbol id="pc1" viewBox="0 0 24 26"><path d="M5 1h9v9H5zM10 5h9v9h-9z" fill="none" stroke="#444" stroke-width="1.800"/><rect y="18" width="24" height="8" fill="#000"/></symbol>
  <symbol id="pc2" viewBox="0 0 24 26"><path d="M4 3l8-3 8 3v10l-8 3-8-3z" fill="#999"/><path d="M12 6l8-3v10l-8 3z" fill="#555"/><rect y="18" width="24" height="8" fill="#808080"/></symbol>
  <symbol id="pc3" viewBox="0 0 24 26"><path d="M4 3l15-3v12L4 15z" fill="#666"/><path d="M11 2v12M5 9l13-3M8 5v3M15 4v3" stroke="#ddd" stroke-width="1.300"/><rect y="18" width="24" height="8" fill="#ff8040"/></symbol>
  <symbol id="pc4" viewBox="0 0 24 24"><circle cx="12" cy="12" r="11.500" fill="#444"/><circle cx="12" cy="12" r="10" fill="url(#gSteel)"/><path d="M4 8q8-5 16 0M8.500 9v9M11.500 8v12M15.500 8v9M4 15h5" stroke="#333" stroke-width="1.300" fill="none"/></symbol>
  <symbol id="at1" viewBox="0 0 24 24"><path d="M1 9h22" stroke="#4a83bd" stroke-width="2"/><path d="M1 13h22" stroke="#5a9382" stroke-width="3"/><path d="M1 17.500h22" stroke="#222" stroke-width="1.500" stroke-dasharray="3 1.500"/><path d="M0 3.500h24" stroke="#bbb"/><path d="M4 1l2.500 2.500L4 6 1.500 3.500z" fill="#b98f4c"/><path d="M12 1l2.500 2.500L12 6 9.500 3.500z" fill="#4a83bd"/><path d="M20 1l2.500 2.500L20 6l-2.500-2.500z" fill="#5a9382"/><path d="M4 20v4M2 22h4" stroke="#4a83bd" stroke-width="1.600"/><path d="M12 20v4M10 22h4" stroke="#dc5032" stroke-width="1.600"/><path d="M20 20v4M18 22h4" stroke="#333" stroke-width="1.600"/></symbol>
  <symbol id="at2" viewBox="0 0 24 24"><path d="M1 1h9v5M1 1v9h4" fill="none" stroke="#b98f4c" stroke-width="2"/><path d="M23 14h-4M23 14v9h-8v-4" fill="none" stroke="#5a9382" stroke-width="2"/><path d="M7 7l9 8" stroke="#3a78bd" stroke-width="4"/><path d="M19 9v9h-9z" fill="#3a78bd"/></symbol>
  <symbol id="at3" viewBox="0 0 24 24"><path d="M0 0h6v6H0z" fill="#dc5032"/><path d="M0 8h6v6H0z" fill="#4a83bd"/><path d="M0 16h6v6H0z" fill="#b98f4c"/><path d="M8 11h6" stroke="#3a78bd" stroke-width="2"/><path d="M13 7l4 4-4 4z" fill="#3a78bd"/><path d="M19 1h4v4h-4zM19 9h4v4h-4zM19 17h4v4h-4z" fill="none" stroke="#777" stroke-width="1.500"/></symbol>
  <symbol id="lev" viewBox="0 0 24 24"><path d="M0 5l10-5 11 5-11 5z" fill="#4a83bd"/><path d="M0 11l3-1 7 3 7-3v4l-7 3-10-5zM0 17l3-1 7 3 7-3v3l-7 4-10-5z" fill="#aaa"/><path d="M20 6v10" stroke="#5a9382" stroke-width="2.500"/><path d="M16 14h8l-4 6z" fill="#5a9382"/></symbol>
  <symbol id="ext" viewBox="0 0 24 24"><path d="M8 5H3v16h15v-5" fill="none" stroke="#4a83bd" stroke-width="3"/><path d="M11 1h10v10l-4-4-5 6-3-3 6-5z" fill="#4a83bd"/></symbol>

  <symbol id="o1" viewBox="0 0 24 24"><g fill="none" stroke="#e6ecf5" stroke-width="1.800"><circle cx="12" cy="12" r="10"/><path d="M9 2.500q-3 9.500 0 19M15 2.500q3 9.500 0 19M2.500 9q9.500-3 19 0M2.500 15q9.500 3 19 0"/></g></symbol>
  <symbol id="o2" viewBox="0 0 24 24"><g fill="none" stroke="#bccbe2" stroke-width="1.600"><circle cx="12" cy="12" r="10"/><path d="M9 2.500q-3 9.500 0 19M15 2.500q3 9.500 0 19M2.500 9q9.500-3 19 0M2.500 15q9.500 3 19 0"/></g></symbol>
  <symbol id="o3" viewBox="0 0 24 24"><circle cx="12" cy="12" r="10" fill="none" stroke="#e6ecf5" stroke-width="1.800"/><path d="M14 2q3 8 1 14-6 2-12 0M15 16l4 3M15 16l-1 6" fill="none" stroke="#e6ecf5" stroke-width="1.800"/></symbol>
  <symbol id="o4" viewBox="0 0 24 24"><circle cx="12" cy="12" r="11" fill="url(#gOrb)"/></symbol>
  <symbol id="o6" viewBox="0 0 24 24"><circle cx="12" cy="12" r="11" fill="#a9a9a9"/><path d="M4 20A11 11 0 0 1 20 4z" fill="#d5d9e0"/><path d="M3 21L21 3" stroke="#2b579a" stroke-width="1.500"/></symbol>

  <symbol id="gn" viewBox="0 0 64 72"><path d="M12 55V30" stroke="#006400" stroke-width="2"/><path d="M12 20l3 12H9z" fill="#008a00"/><path d="M13 54.500h20" stroke="#b00000" stroke-width="2"/><path d="M46 54.500l-12-3v6z" fill="#c80000"/><rect x="11" y="53" width="3" height="3" fill="#999"/></symbol>
</svg>

<header class="titlebar d-flex align-items-center position-relative">
  <div class="qat d-flex align-items-center pt-1">
    <button aria-label="새로 만들기"><svg class="i24"><use href="#new"/></svg></button>
    <button class="ms-1" aria-label="격자"><svg class="i24"><use href="#check"/></svg></button>
    <button class="ms-1" aria-label="저장"><svg class="i24"><use href="#save"/></svg></button>
    <button class="mx-1 d-flex align-items-center gap-2" aria-label="열기"><svg class="i24"><use href="#open"/></svg><span class="caret"></span></button>
    <button aria-label="인쇄"><svg class="i24"><use href="#print"/></svg></button>
    <button class="ms-1" aria-label="다른 이름으로 저장"><svg class="i24"><use href="#saveas"/></svg></button>
    <button class="ms-1" aria-label="압축"><svg class="i24"><use href="#zip"/></svg></button>
    <span class="vr mx-1"></span>
    <button aria-label="실행 취소"><svg class="i24"><use href="#undo"/></svg></button>
    <button class="ms-1" aria-label="다시 실행"><svg class="i24" viewBox="0 0 24 24"><use href="#undo" width="24" height="24" transform="matrix(-1 0 0 1 24 0)"/></svg></button>
    <button aria-label="사용자 지정"><svg width="12" height="12"><path d="M2 2h9" stroke="#666" stroke-width="1.500"/><path d="M2 6h9l-4.500 5z" fill="#666"/></svg></button>
  </div>
  <div class="win-name position-absolute text-center pe-none">Mastercam 디자인 2021</div>
  <div class="win-btns ms-auto d-flex">
    <button aria-label="최소화"><svg class="i24" viewBox="0 0 24 24"><path d="M5 15.500h10" stroke="#666" stroke-width="3"/></svg></button>
    <button aria-label="이전 크기로"><svg class="i24" viewBox="0 0 24 24"><path d="M10 9V6h8v7h-3M6.500 10.500h8v6h-8zM6 10.500h9" fill="none" stroke="#666" stroke-width="2"/></svg></button>
    <button aria-label="닫기"><svg class="i24" viewBox="0 0 24 24"><path d="M7 6l10 10M17 6L7 16" stroke="#555" stroke-width="2.500"/></svg></button>
  </div>
</header>

<nav class="tabs-row d-flex align-items-start">
  <button class="tab tab-file">파일</button>
  <button class="tab">홈</button>
  <button class="tab">와이어프레임</button>
  <button class="tab">곡면</button>
  <button class="tab">솔리드</button>
  <button class="tab">모델 수정</button>
  <button class="tab">도면</button>
  <button class="tab">이동</button>
  <button class="tab">머신</button>
  <button class="tab tab-on" aria-current="page">뷰</button>
  <div class="account ms-auto d-flex align-items-center h-100">
    <a href="#" class="text-reset text-decoration-none lat">My Mastercam</a>
    <button aria-label="도움말"><svg class="i24"><use href="#help"/></svg></button>
    <button aria-label="리본 축소"><svg width="12" height="12"><path d="M1.500 9L6 4l4.500 5" fill="none" stroke="#555" stroke-width="2.500"/></svg></button>
  </div>
</nav>

<section class="ribbon d-flex flex-nowrap" aria-label="뷰 리본">
  <div class="rgroup g-zoom">
    <div class="tools d-flex">
      <button class="big w-x"><svg class="i48"><use href="#fit"/></svg><span>자동배율</span><span><i class="caret caret-big"></i></span></button>
      <button class="big w-s"><svg class="i48"><use href="#win"/></svg><span>윈도</span></button>
      <div>
        <button class="small-btn"><svg class="i24"><use href="#half"/></svg><span>화면축소 <span class="lat">50%</span></span></button>
        <button class="small-btn"><svg class="i24"><use href="#minus"/></svg><span>화면축소 <span class="lat">80%</span></span></button>
      </div>
    </div>
    <div class="caption d-flex align-items-center"><span class="flex-grow-1 text-center">화면확대</span></div>
  </div>
  <div class="rgroup g-view">
    <div class="tools d-flex">
      <button class="big w-s ms-1"><svg class="i48"><use href="#v-big"/></svg><span>평면</span></button>
      <div class="me-1">
        <button class="small-btn"><svg class="i24"><use href="#v-iso"/></svg>입체<i class="caret"></i></button>
        <button class="small-btn"><svg class="i24"><use href="#v-right"/></svg>우측면</button>
        <button class="small-btn"><svg class="i24"><use href="#v-front"/></svg>정면<i class="caret"></i></button>
      </div>
      <div class="me-1">
        <button class="small-btn"><svg class="i24"><use href="#v-rot"/></svg>회전</button>
        <button class="small-btn"><svg class="i24"><use href="#v-eq"/></svg>= 작업평면<i class="caret"></i></button>
        <button class="small-btn off" disabled><svg class="i24"><use href="#v-save"/></svg>저장</button>
      </div>
      <button class="big w-s"><svg class="i48"><use href="#section"/></svg><span>섹션</span><span>뷰<i class="caret caret-big"></i></span></button>
    </div>
    <div class="caption d-flex align-items-center"><span class="flex-grow-1 text-center">그래픽 뷰</span></div>
  </div>
  <div class="rgroup g-disp">
    <div class="tools d-flex">
      <button class="big w-z"><svg class="i48"><use href="#wire"/></svg><span>와이어프레임</span><span><i class="caret caret-big"></i></span></button>
      <button class="big w-y"><svg class="i48"><use href="#shade"/></svg><span>셰이딩</span><span>외측표시<i class="caret caret-big"></i></span></button>
      <button class="big w-s"><svg class="i48"><use href="#mat"/></svg><span>재질</span></button>
      <div>
        <button class="small-btn"><svg class="i24"><use href="#trans"/></svg>투명도</button>
        <button class="small-btn"><svg class="i24"><use href="#back"/></svg>뒷면</button>
      </div>
    </div>
    <div class="caption d-flex align-items-center"><span class="flex-grow-1 text-center">화면표시 옵션</span><button class="launch" aria-label="화면표시 옵션 설정"><svg width="12" height="12"><use href="#lau"/></svg></button></div>
  </div>
  <div class="rgroup g-path">
    <div class="tools d-flex justify-content-center ps-0">
      <button class="big w-l"><svg class="i48"><use href="#adv"/></svg><span>고급</span><span>표시 <i class="caret caret-big"></i></span></button>
    </div>
    <div class="caption d-flex align-items-center"><span class="flex-grow-1 text-center">가공경로</span><button class="launch" aria-label="가공경로 설정"><svg width="12" height="12"><use href="#lau"/></svg></button></div>
  </div>
  <div class="rgroup g-mgr tight">
    <div class="tools d-flex">
      <div>
        <button class="mgr on" aria-pressed="true"><svg width="18" height="24"><use href="#mgr"/></svg>가공경로</button>
        <button class="mgr on" aria-pressed="true"><svg width="18" height="24"><use href="#mgr"/></svg>솔리드</button>
        <button class="mgr on" aria-pressed="true"><svg width="18" height="24"><use href="#mgr"/></svg>평면</button>
      </div>
      <div>
        <button class="mgr on" aria-pressed="true"><svg width="18" height="24"><use href="#mgr"/></svg>레벨</button>
        <button class="mgr"><svg width="18" height="24"><use href="#mgr"/></svg>다중-작업처리</button>
        <button class="mgr off" disabled><svg width="18" height="24"><use href="#mgr"/></svg>아트</button>
      </div>
      <div>
        <button class="mgr"><svg width="18" height="24"><use href="#mgr"/></svg>그룹</button>
        <button class="mgr on" aria-pressed="true"><svg width="18" height="24"><use href="#mgr"/></svg>최근 사용된 기능</button>
      </div>
    </div>
    <div class="caption d-flex align-items-center"><span class="flex-grow-1 text-center">관리자</span></div>
  </div>
  <div class="rgroup g-axis tight">
    <div class="tools d-flex">
      <button class="big w-m on" aria-pressed="true"><svg class="i48"><use href="#axes"/></svg><span>축</span><span>표시 <i class="caret caret-big"></i></span></button>
      <button class="big w-m on" aria-pressed="true"><svg class="i48"><use href="#gnom"/></svg><span>지시침</span><span>표시 <i class="caret caret-big"></i></span></button>
    </div>
    <div class="caption d-flex align-items-center"><span class="flex-grow-1 text-center">화면표시</span></div>
  </div>
  <div class="rgroup g-grid tight">
    <div class="tools d-flex">
      <button class="big w-g on" aria-pressed="true"><svg class="i48"><use href="#grid"/></svg><span>그리드</span><span>화면표시</span></button>
      <button class="big w-g"><svg class="i48"><use href="#snap"/></svg><span>그리드에</span><span>스냅</span></button>
    </div>
    <div class="caption d-flex align-items-center"><span class="flex-grow-1 text-center">그리드</span><button class="launch" aria-label="그리드 설정"><svg width="12" height="12"><use href="#lau"/></svg></button></div>
  </div>
  <div class="rgroup g-ctl">
    <div class="tools d-flex justify-content-center ps-0">
      <button class="big w-s"><svg class="i48"><use href="#knob"/></svg><span>회전</span><span>위치</span></button>
    </div>
    <div class="caption d-flex align-items-center"><span class="flex-grow-1 text-center">컨트롤러</span></div>
  </div>
  <div class="rgroup g-sheet">
    <div class="tools d-flex">
      <button class="big w-x"><svg class="i48"><use href="#vs"/></svg><span>켜기/끄기</span></button>
      <button class="big w-l off" disabled><svg class="i48"><use href="#vsnew"/></svg><span>새로</span><span>만들기<i class="caret caret-big"></i></span></button>
      <div class="ms-1">
        <button class="small-btn off" disabled><svg class="i24"><use href="#bmsave"/></svg>북마크 저장</button>
        <button class="small-btn off" disabled><svg class="i24"><use href="#bmback"/></svg>북마크 복원</button>
      </div>
    </div>
    <div class="caption d-flex align-items-center"><span class="flex-grow-1 text-center">뷰시트</span><button class="launch" aria-label="뷰시트 설정"><svg width="12" height="12"><use href="#lau"/></svg></button></div>
  </div>
</section>

<main class="d-flex flex-grow-1 pt-1 overflow-hidden">
  <aside class="side d-flex flex-column flex-shrink-0">
    <div class="side-head d-flex align-items-center">
      <h1 class="side-title me-auto">가공경로</h1>
      <button class="head-btn" aria-label="메뉴"><i class="caret caret-big d-block"></i></button>
      <button class="head-btn" aria-label="고정"><svg width="12" height="16"><path d="M3 1h6v8H3zM0 9.500h12M6 10v5M8 1v8" fill="none" stroke="#555" stroke-width="1.500"/></svg></button>
      <button aria-label="닫기"><svg width="14" height="14"><path d="M2 2l10 10M12 2L2 12" stroke="#555" stroke-width="2.200"/></svg></button>
    </div>
    <div class="strip d-flex align-items-center">
      <button aria-label="모두 선택"><svg class="i24"><use href="#play"/></svg></button>
      <button aria-label="선택 해제"><svg class="i24"><use href="#xsel"/></svg></button>
      <span class="rule"></span>
      <button aria-label="재생성"><svg class="i24"><use href="#tplay"/></svg></button>
      <button aria-label="무효 재생성"><svg class="i24"><use href="#tx"/></svg></button>
      <button class="d-flex align-items-center gap-2" aria-label="교체"><svg class="i24"><use href="#tswap"/></svg><i class="caret off"></i></button>
      <span class="rule"></span>
      <button aria-label="경로 확인"><svg class="i24"><use href="#wbox"/></svg></button>
      <button aria-label="모의가공"><svg class="i24"><use href="#verify"/></svg></button>
      <button aria-label="옵션"><svg class="i24"><use href="#wgear"/></svg></button>
      <button aria-label="G1"><svg class="i24" viewBox="0 0 24 24"><text x="1" y="18" font-family="Liberation Sans" font-size="17" fill="#3a78bd">G1</text></svg></button>
      <button aria-label="고속이송"><svg class="i24"><use href="#texp"/></svg></button>
      <span class="rule"></span>
      <button aria-label="도구"><svg class="i24"><use href="#wrench"/></svg></button>
      <span class="rule"></span>
      <button aria-label="도움말"><svg class="i24"><use href="#help"/></svg></button>
    </div>
    <div class="strip d-flex align-items-center">
      <button aria-label="잠금"><svg class="i24"><use href="#lock"/></svg></button>
      <button aria-label="경로 표시"><svg class="i24"><use href="#waves"/></svg></button>
      <button aria-label="포스트 제외"><svg class="i24"><use href="#ghost"/></svg></button>
      <span class="rule"></span>
      <button aria-label="아래로"><svg class="i24"><use href="#down"/></svg></button>
      <button aria-label="위로"><svg class="i24"><use href="#up"/></svg></button>
      <button aria-label="삽입 위치"><svg class="i24"><use href="#loop"/></svg></button>
      <button aria-label="스크롤"><svg class="i24"><use href="#split"/></svg></button>
      <span class="rule"></span>
      <button aria-label="선택 경로만"><svg class="i24"><use href="#wsel"/></svg></button>
      <button aria-label="관련 도형만"><svg class="i24"><use href="#shapes"/></svg></button>
      <button class="d-flex align-items-center gap-2" aria-label="고급 표시"><svg class="i24"><use href="#adv"/></svg><i class="caret off"></i></button>
      <span class="rule"></span>
      <button aria-label="머신"><svg class="i24"><use href="#mach"/></svg></button>
      <button aria-label="편집"><svg class="i24"><use href="#balance"/></svg></button>
    </div>
    <div class="tree flex-grow-1"></div>
    <div class="side-tabs d-flex">
      <button class="cur" aria-current="true">가공경로</button>
      <button>솔리드</button>
      <button>평면</button>
      <button>레벨</button>
      <button>최근 사용된 기능</button>
    </div>
  </aside>

  <section class="stage position-relative flex-grow-1" aria-label="그래픽 창">
    <div class="selbar position-absolute d-flex align-items-center">
      <button class="dim" aria-label="잠금"><svg class="i24"><use href="#ulock"/></svg></button>
      <button class="d-flex align-items-center" aria-label="자동커서"><svg class="i24 me-1"><use href="#dsel"/></svg><span class="auto-name me-2">자동커서</span><i class="caret ms-1 me-2"></i></button>
      <button class="ms-1" aria-label="좌표 입력"><svg class="i24"><use href="#xyz"/></svg></button>
      <button aria-label="커서 설정"><svg class="i24"><use href="#cogp"/></svg></button>
      <span class="bar"></span>
      <button class="dim" aria-label="선택"><svg class="i24"><use href="#ptr"/></svg></button>
      <button class="dim" aria-label="솔리드 선택"><svg class="i24"><use href="#solck"/></svg></button>
      <button class="dim" aria-label="모서리 선택"><svg class="i24"><use href="#soled"/></svg></button>
      <button class="dim" aria-label="면 선택"><svg class="i24"><use href="#solfc"/></svg></button>
      <button class="dim" aria-label="바디 선택"><svg class="i24"><use href="#sol"/></svg></button>
      <button aria-label="뒷면 선택"><svg class="i24"><use href="#solc"/></svg></button>
      <button class="d-flex align-items-center ms-1" aria-label="선택 방법"><svg class="i24"><use href="#dsel"/></svg><i class="caret me-3"></i></button>
      <button class="d-flex align-items-center" aria-label="윈도 선택"><svg class="i24"><use href="#area"/></svg><i class="caret"></i></button>
      <button class="lit" aria-label="선택 확인"><svg class="i24 me-0"><use href="#clock"/></svg></button>
      <button aria-label="선택 유효화"><svg class="i24"><use href="#selchk"/></svg></button>
      <button aria-label="선택 반전"><svg class="i24"><use href="#selinv"/></svg></button>
      <button class="dim" aria-label="이전 선택"><svg class="i24"><use href="#selundo"/></svg></button>
    </div>

    <svg class="gnomon gn-tl position-absolute"><use href="#gn"/><g font-family="DejaVu Sans" font-size="11" font-weight="700"><text x="9" y="15" fill="#00b000">Y</text><text x="52" y="58" fill="#f00">X</text><text x="8" y="68" fill="#fff">C</text></g></svg>
    <svg class="gnomon gn-tr position-absolute"><use href="#gn"/><g font-family="DejaVu Sans" font-size="11" font-weight="700"><text x="9" y="15" fill="#00b000">Y</text><text x="52" y="58" fill="#f00">X</text><text x="9" y="68" fill="#fff">T</text></g></svg>
    <svg class="gnomon gn-bl position-absolute"><use href="#gn"/><g font-family="DejaVu Sans" font-size="11" font-weight="700"><text x="9" y="15" fill="#00b000">Y</text><text x="52" y="58" fill="#f00">X</text></g></svg>
    <span class="plane-name position-absolute">평면</span>
    <div class="scalebar position-absolute">15.173 mm<hr>미터계</div>

    <div class="quick position-absolute d-flex flex-column justify-content-between">
      <button class="slash" aria-label="점"><svg class="i24"><use href="#q1"/></svg></button>
      <button class="slash" aria-label="선"><svg class="i24"><use href="#q2"/></svg></button>
      <button class="slash" aria-label="원호"><svg class="i24"><use href="#q3"/></svg></button>
      <button class="slash" aria-label="스플라인"><svg class="i24"><use href="#q4"/></svg></button>
      <button class="slash" aria-label="와이어프레임"><svg class="i24"><use href="#q5"/></svg></button>
      <button class="slash" aria-label="도면"><svg class="i24"><use href="#q6"/></svg></button>
      <button class="slash" aria-label="곡면"><svg class="i24"><use href="#q7"/></svg></button>
      <button class="slash" aria-label="솔리드"><svg class="i24"><use href="#q8"/></svg></button>
      <button aria-label="그룹"><svg class="i24"><use href="#q9"/></svg></button>
      <button aria-label="결과"><svg class="i24"><use href="#q10"/></svg></button>
      <button aria-label="명명된 그룹"><svg class="i24"><use href="#q11"/></svg></button>
      <button class="slash" aria-label="색상"><svg class="i24"><use href="#q12"/></svg></button>
      <button class="slash" aria-label="레벨"><svg class="i24"><use href="#q13"/></svg></button>
      <button class="slash" aria-label="고급 선택"><svg class="i24"><use href="#cog"/></svg></button>
      <button class="slash" aria-label="해제"><svg class="i24"><use href="#q15"/></svg></button>
    </div>

    <div class="axis-h position-absolute pe-none"></div>
    <div class="axis-v position-absolute pe-none"></div>

    <div class="pop position-absolute">
      <div class="mini">
        <div class="line d-flex align-items-center">
          <button class="combo c-pt" aria-label="점 스타일"><svg width="60" height="27"><path d="M22 15h16M30 8v14M25 20l10-10M26 11l8 8" stroke="#000" stroke-width="1.500"/></svg><i class="caret"></i></button>
          <button class="combo c-ln" aria-label="선 스타일"><svg width="80" height="27"><path d="M14 13.500h60" stroke="#000" stroke-width="3"/></svg><i class="caret"></i></button>
          <button class="combo c-ln" aria-label="선 굵기"><svg width="80" height="27"><path d="M14 13h60" stroke="#000" stroke-width="1.500"/></svg><i class="caret"></i></button>
          <button class="pick ms-1" aria-label="와이어프레임 색상"><svg width="24" height="26"><use href="#pc1"/></svg><i class="caret"></i></button>
          <button class="pick" aria-label="솔리드 색상"><svg width="24" height="26"><use href="#pc2"/></svg><i class="caret"></i></button>
          <button class="pick" aria-label="곡면 색상"><svg width="24" height="26"><use href="#pc3"/></svg><i class="caret"></i></button>
          <button class="pick me-0" aria-label="재질"><svg class="i24"><use href="#pc4"/></svg><i class="caret"></i></button>
        </div>
        <div class="line d-flex align-items-center">
          <button class="ms-1" aria-label="속성 설정"><svg class="i24"><use href="#at1"/></svg></button>
          <button class="tool-btn" aria-label="레벨 변경"><svg class="i24"><use href="#at2"/></svg></button>
          <button class="tool-btn" aria-label="속성 변경"><svg class="i24"><use href="#at3"/></svg></button>
          <button class="tool-btn lat">3D</button>
          <label class="ms-3 me-2 lat" for="zdepth">Z</label>
          <div class="combo c-num ms-1"><input id="zdepth" value="0.0"><i class="caret"></i></div>
          <label class="mx-1" for="level" aria-label="레벨"><svg class="i24"><use href="#lev"/></svg></label>
          <div class="combo c-num"><input id="level" value="1"><i class="caret"></i></div>
          <button class="ms-1" aria-label="창으로 열기"><svg class="i24"><use href="#ext"/></svg></button>
        </div>
      </div>
      <div class="menu">
        <button><svg class="i24"><use href="#win"/></svg><span>화면확대<span class="lat">(Z)</span></span></button>
        <button><svg class="i24"><use href="#minus"/></svg><span>화면축소 <span class="lat">80%(U)</span></span></button>
        <button><svg class="i24"><use href="#dyn"/></svg><span>다이내믹 회전<span class="lat">(D)</span></span></button>
        <button><svg class="i24"><use href="#fit-s"/></svg><span>자동배율<span class="lat">(F)</span></span></button>
        <hr>
        <button><svg class="i24"><use href="#v-top"/></svg><span>평면 <span class="lat">(WCS)(T)</span></span></button>
        <button><svg class="i24"><use href="#v-front"/></svg><span>정면 <span class="lat">(WCS)(F)</span></span></button>
        <button><svg class="i24"><use href="#v-right"/></svg><span>우측면 <span class="lat">(WCS)(R)</span></span></button>
        <button><svg class="i24"><use href="#v-iso"/></svg><span>입체 <span class="lat">(WCS)(I)</span></span></button>
        <button><svg class="i24"></svg><span>그래픽 뷰</span><i class="sub"></i></button>
        <button><svg class="i24"><use href="#quickp"/></svg><span>퀵 작업평면</span></button>
        <hr>
        <button><svg class="i24"><use href="#del"/></svg><span>요소 지우기<span class="lat">(E)</span></span></button>
        <hr>
        <button><svg class="i24"><use href="#dist"/></svg><span>거리 측정...</span></button>
        <button><svg class="i24"><use href="#prop"/></svg><span>요소속성 측정...</span></button>
      </div>
    </div>
  </section>
</main>

<footer class="status d-flex align-items-center justify-content-end flex-shrink-0">
  <button class="me-3 pe-1">섹션 뷰: 끄기</button>
  <span class="wide-gap">선택된 요소: <span class="lat">0</span></span>
  <span class="lat me-2">X:</span><span class="lat me-4 pe-3">54.52662</span>
  <span class="lat me-2">Y:</span><span class="lat me-4 pe-2">-61.55976</span>
  <button class="drop lat"><span>Z: 0.00000</span><i class="caret"></i></button>
  <button class="me-3 ms-1 lat">3D</button>
  <button class="drop">작업평면: 평면<i class="caret"></i></button>
  <button class="drop">공구평면: 평면<i class="caret"></i></button>
  <button class="drop"><span><span class="lat">WCS:</span> 평면</span><i class="caret"></i></button>
  <button class="orb" aria-label="와이어프레임"><svg class="i24"><use href="#o1"/></svg></button>
  <button class="orb" aria-label="숨은선 흐리게"><svg class="i24"><use href="#o2"/></svg></button>
  <button class="orb" aria-label="숨은선 제거"><svg class="i24"><use href="#o3"/></svg></button>
  <button class="orb" aria-label="셰이딩"><svg class="i24"><use href="#o4"/></svg></button>
  <button class="orb picked" aria-label="외측 셰이딩" aria-pressed="true"><svg class="i24"><use href="#o4"/></svg></button>
  <button class="orb" aria-label="투명도"><svg class="i24"><use href="#o6"/></svg></button>
</footer>
</body>
</html>
